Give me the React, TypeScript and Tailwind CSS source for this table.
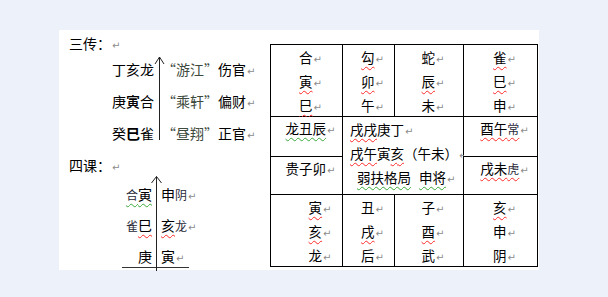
import React from "react";

const Pm = () => (
  <span className="[font-family:'DejaVu_Sans',sans-serif] text-[10px] leading-none text-[#8c8c8c] ml-px">↵</span>
);

const R = ({ children }: { children: React.ReactNode }) => (
  <span className="underline decoration-wavy decoration-[#ff2a2a] decoration-1 underline-offset-[3px]">{children}</span>
);

const G = ({ children }: { children: React.ReactNode }) => (
  <span className="underline decoration-wavy decoration-[#3aa83a] decoration-1 underline-offset-[3px]">{children}</span>
);

const Q = ({ children }: { children: React.ReactNode }) => (
  <span className="text-[#3d4a3d]">{children}</span>
);

const S = ({ children }: { children: React.ReactNode }) => (
  <span className="text-[12px] text-[#2a2a3a]">{children}</span>
);

const cell = "bg-white text-[13.5px] text-center pl-2 whitespace-nowrap";

function Table() {
  return (
    <div className="mt-[14px] self-start grid grid-cols-[71px_51px_68px_73px] grid-rows-[71px_39px_37px_71px] gap-px bg-black p-px">
      <div className={`${cell} leading-[24px]`}>
        <div className="h-[24px]">合<Pm /></div>
        <div className="h-[24px]"><R>寅</R><Pm /></div>
        <div className="h-[24px]"><R>巳</R><Pm /></div>
      </div>
      <div className={`${cell} leading-[24px]`}>
        <div className="h-[24px]"><R>勾</R><Pm /></div>
        <div className="h-[24px]"><R>卯</R><Pm /></div>
        <div className="h-[24px]">午<Pm /></div>
      </div>
      <div className={`${cell} leading-[24px]`}>
        <div className="h-[24px]">蛇<Pm /></div>
        <div className="h-[24px]"><R>辰</R><Pm /></div>
        <div className="h-[24px]">未<Pm /></div>
      </div>
      <div className={`${cell} leading-[24px]`}>
        <div className="h-[24px]"><R>雀</R><Pm /></div>
        <div className="h-[24px]"><R>巳</R><Pm /></div>
        <div className="h-[24px]">申<Pm /></div>
      </div>

      <div className={`${cell} leading-[22px]`}>
        <G>龙丑辰</G><Pm />
      </div>
      <div className="col-span-2 row-span-2 bg-white text-[13.5px] leading-[24px] pl-[7px] whitespace-nowrap">
        <div className="h-[24px]"><R>戌戌</R>庚丁<Pm /></div>
        <div className="h-[24px]"><R>戌午</R>寅<R>亥</R>（午未）<Pm /></div>
        <div className="h-[24px] pl-[7px]"><G>弱扶格局</G><span className="inline-block w-[8px]" /><G>申将</G><Pm /></div>
      </div>
      <div className={`${cell} leading-[22px]`}>
        <R>酉午<S>常</S></R><Pm />
      </div>
      <div className={`${cell} leading-[22px]`}>
        贵子卯<Pm />
      </div>
      <div className={`${cell} leading-[22px]`}>
        <R>戌未<S>虎</S></R><Pm />
      </div>

      <div className="bg-white text-[13.5px] leading-[24px] text-center pl-[27px] whitespace-nowrap">
        <div className="h-[24px]"><R>寅</R><Pm /></div>
        <div className="h-[24px]"><R>亥</R><Pm /></div>
        <div className="h-[24px]">龙<Pm /></div>
      </div>
      <div className={`${cell} leading-[24px]`}>
        <div className="h-[24px]">丑<Pm /></div>
        <div className="h-[24px]"><R>戌</R><Pm /></div>
        <div className="h-[24px]">后<Pm /></div>
      </div>
      <div className={`${cell} leading-[24px]`}>
        <div className="h-[24px]">子<Pm /></div>
        <div className="h-[24px]"><R>酉</R><Pm /></div>
        <div className="h-[24px]">武<Pm /></div>
      </div>
      <div className={`${cell} leading-[24px]`}>
        <div className="h-[24px]"><R>亥</R><Pm /></div>
        <div className="h-[24px]">申<Pm /></div>
        <div className="h-[24px]">阴<Pm /></div>
      </div>
    </div>
  );
}

export default function App() {
  return (
    <div className="w-[608px] h-[297px] bg-[#edf1fa] pt-[30px] pl-[59px] text-black [font-family:'Noto_Sans_CJK_SC',sans-serif]">
      <div className="w-[480px] h-[240px] bg-white flex">
        <div className="w-[211px] shrink-0 pt-[3px]">
          <div className="h-[20px] leading-[20px] text-[14px] pl-[10px] whitespace-nowrap">
            三传：<Pm />
          </div>

          <div className="h-[96px] flex pl-[53px] text-[14px] leading-[32px]">
            <div className="w-[42px] whitespace-nowrap">
              <div className="h-[32px]">丁亥龙</div>
              <div className="h-[32px]">庚<span className="font-medium">寅</span>合</div>
              <div className="h-[32px]">癸<span className="font-semibold">巳</span>雀</div>
            </div>
            <svg width="8" height="96" className="shrink-0 overflow-visible">
              <line x1="5.5" y1="4" x2="5.5" y2="87" stroke="#222" strokeWidth="1" />
              <polyline points="1,11 5.5,4 10,11" fill="none" stroke="#222" strokeWidth="1" />
            </svg>
            <div className="whitespace-nowrap">
              <div className="h-[32px]"><Q>“游江”</Q>伤官<Pm /></div>
              <div className="h-[32px]"><Q>“乘轩”</Q>偏财<Pm /></div>
              <div className="h-[32px]"><Q>“昼翔”</Q>正官<Pm /></div>
            </div>
          </div>

          <div className="mt-[6px] h-[20px] leading-[20px] text-[14px] pl-[10px] whitespace-nowrap">
            四课：<Pm />
          </div>

          <div className="mt-[1px] ml-[63px] w-[67px] h-[92px] border-b border-[#333] flex text-[14px] leading-[31px]">
            <div className="w-[30px] shrink-0 pt-[3px] text-right whitespace-nowrap">
              <div className="h-[31px]"><G><S>合</S>寅</G></div>
              <div className="h-[31px]"><S>雀</S><R>巳</R></div>
              <div className="h-[31px]">庚</div>
            </div>
            <svg width="9" height="95" className="shrink-0 overflow-visible">
              <line x1="4.5" y1="0.5" x2="4.5" y2="95" stroke="#222" strokeWidth="1" />
              <polyline points="-0.5,7 4.5,0.5 9.5,7" fill="none" stroke="#222" strokeWidth="1" />
            </svg>
            <div className="pt-[3px] whitespace-nowrap">
              <div className="h-[31px]">申<S>阴</S><Pm /></div>
              <div className="h-[31px]"><R>亥</R><S>龙</S><Pm /></div>
              <div className="h-[31px]">寅<Pm /></div>
            </div>
          </div>
        </div>

        <Table />
      </div>
    </div>
  );
}
